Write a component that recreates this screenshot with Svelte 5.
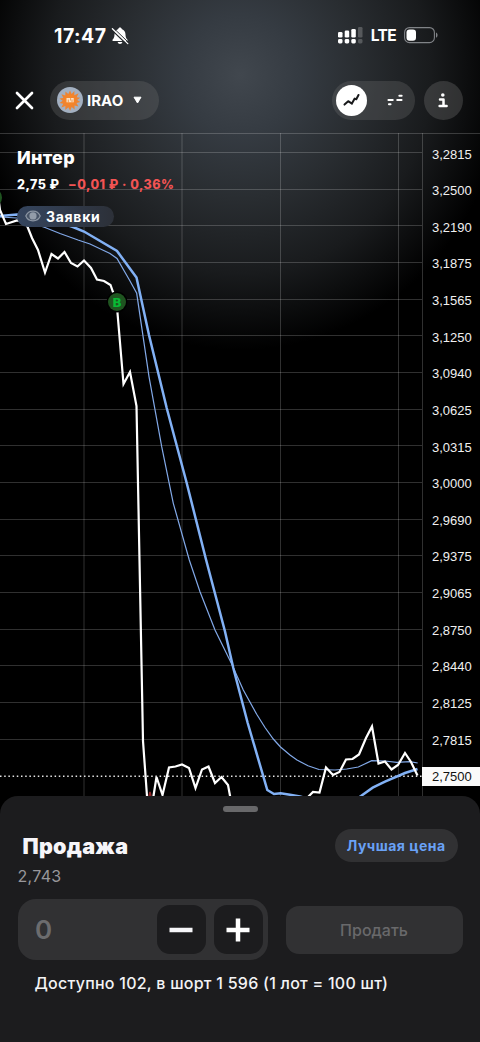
<script lang="ts">
  type Point = [number, number];

  const prices = [
    "3,2815", "3,2500", "3,2190", "3,1875", "3,1565", "3,1250",
    "3,0940", "3,0625", "3,0315", "3,0000", "2,9690", "2,9375",
    "2,9065", "2,8750", "2,8440", "2,8125", "2,7815", "2,7500",
  ];
  const current = "2,7500";

  const rowStep = 36.67;
  const rows = prices.slice(0, -1).map((_, i) => Math.floor(19.6 + i * rowStep) + 0.5);
  const columns = [84, 182, 280.5, 398.5, 422.5];

  const price: Point[] = [
    [-2, 62], [0, 77], [6, 91], [17, 87.5], [26, 90], [32, 105], [38, 117], [45, 139.5], [51.5, 121],
    [58, 125.5], [64.5, 119], [71, 130], [77.5, 133.5], [84, 127.5], [91, 135], [97, 146.5],
    [104, 148], [110.5, 152], [113, 159], [117, 169], [117.5, 180], [123.5, 251], [130, 239],
    [136.5, 273], [139.5, 427], [143, 608], [147, 663], [150, 700], [153.5, 663], [156.5, 644],
    [162.5, 662], [169, 634.5], [175.5, 633.5], [182, 631.5], [189, 635], [195.5, 655],
    [202, 636.5], [208.5, 633.5], [215, 650], [221.5, 644], [228, 652], [231, 668], [240, 700],
    [300, 700], [308, 664], [313, 659], [319.5, 659.5], [326, 634.5], [333, 642], [339.5, 639],
    [346, 626.5], [352.5, 626], [359, 621.5], [366, 605], [372, 593.5], [378.5, 630.5],
    [385, 628.5], [391.5, 636.5], [398, 632], [405, 620], [411, 629], [417.5, 642.5],
  ];
  const slow: Point[] = [
    [0, 83], [17, 81.5], [50, 86], [73, 94], [84, 98.5], [117, 118], [136.5, 144.5], [149, 202],
    [166.7, 275], [186.7, 350], [206, 426.5], [225, 498.5], [233.3, 535], [247.7, 590],
    [267.3, 657], [274, 661], [280.7, 660.3], [290, 661.7], [300, 663.5], [330, 672], [350, 670],
    [361, 663], [372.7, 654.7], [385, 648.7], [405, 640], [417.5, 636],
  ];
  const fast: Point[] = [
    [0, 84], [17, 85], [45, 94.5], [60, 100.5], [78, 107], [90, 111], [110, 120.5], [117, 125.5],
    [130, 148], [136.7, 160.3], [149, 243.7], [161.7, 313.7], [173.3, 370.3], [189.3, 427],
    [200, 458.7], [215, 497], [231.7, 531], [243.3, 557], [256.7, 581.3], [265, 594.5],
    [273.3, 606], [280.5, 614], [290, 622], [297, 627], [308, 632.8], [319, 636.5], [335, 637],
    [346.7, 636], [358.3, 634], [371.7, 627.7], [385, 628], [396.7, 629.3], [410, 628.7],
    [417.7, 630],
  ];
</script>

<div class="screen">
  <div class="status">
    <div class="clock">
      <span>17:47</span>
      <svg width="18" height="18" viewBox="0 0 18 18" aria-hidden="true">
        <path d="M9 .6c-.9 0-1.6.6-1.7 1.4C4.700 2.900 3.500 5 3.500 7.500c0 2.700-.8 3.900-1.800 5-.6.7-.2 1.600.7 1.600h13.200c.9 0 1.300-.9.7-1.600-1-1.100-1.800-2.300-1.800-5 0-2.500-1.200-4.600-3.800-5.500C10.600 1.200 9.900.6 9 .6z" fill="#fff" />
        <path d="M6.600 15h4.800c-.3 1.300-1.200 2-2.400 2s-2.100-.7-2.400-2z" fill="#fff" />
        <path d="M1.200 3.200 15.500 17" stroke="#24282b" stroke-width="1.500" />
        <path d="M2.600 1.200 17.400 15.400" stroke="#24282b" stroke-width="1" />
        <path d="M1.400 1.800 16.800 16.600" stroke="#fff" stroke-width="1.300" stroke-linecap="round" />
      </svg>
    </div>
    <div class="network">
      <svg width="25" height="17" viewBox="0 0 25 17" fill="#fff" aria-hidden="true">
        <rect x="0" y="5" width="4.500" height="5.500" rx="1.300" />
        <rect x="6.700" y="3.500" width="4.500" height="7" rx="1.300" />
        <rect x="13.300" y="2" width="4.500" height="8.500" rx="1.300" />
        <rect x="20" y="0" width="4.500" height="10.500" rx="1.300" opacity=".22" />
        <rect x="0" y="12" width="4.500" height="4.500" rx="1.400" />
        <rect x="6.700" y="12" width="4.500" height="4.500" rx="1.400" />
        <rect x="13.300" y="12" width="4.500" height="4.500" rx="1.400" />
        <rect x="20" y="12" width="4.500" height="4.500" rx="1.400" opacity=".22" />
      </svg>
      <span>LTE</span>
      <svg width="35" height="17" viewBox="0 0 35 17" aria-hidden="true">
        <rect x=".6" y=".6" width="29.800" height="15" rx="4.800" fill="none" stroke="#808387" stroke-width="1.100" />
        <rect x="2.500" y="2.500" width="9.500" height="11.200" rx="3" fill="#fff" />
        <path d="M32 5.500c2 .8 2 4.400 0 5.200z" fill="#808387" />
      </svg>
    </div>
  </div>

  <header>
    <svg width="19" height="19" viewBox="0 0 19 19" aria-label="Закрыть">
      <path d="M2 2l15 15M17 2 2 17" stroke="#fff" stroke-width="2.700" stroke-linecap="round" />
    </svg>
    <div class="ticker">
      <svg width="26" height="26" viewBox="0 0 26 26" aria-hidden="true">
        <circle cx="13" cy="13" r="13" fill="#a3b0c1" />
        <path d="M13 3.500l1.600 3.600 2.800-3.100-.1 4.200 4.300-1.900-1.900 3.900 3.500.5-3.100 2.300 3.300 2.100-3.900.8 2 3.600-4-.9.100 4-2.900-2.500-1.600 3.700-1.800-3.500-3 2.700.1-4-4.100 1.400 1.900-3.600-3.700-.8 3.200-2.200-3.300-2.300 3.900-.6-1.800-3.600 3.800 1.100.1-3.900 2.900 2.500z" fill="#ef8430" />
        <circle cx="13" cy="13" r="5.400" fill="#f58529" />
        <path d="M9.500 11h7.200v4.300H9.500z" fill="#fbe3c8" />
        <path d="M11.300 12.600v2.700M13.600 11v2.500M15 12.500v2.800" stroke="#e98432" stroke-width=".8" />
      </svg>
      <span>IRAO</span>
      <svg width="9" height="8" viewBox="0 0 9 8" aria-hidden="true">
        <path d="M1 1.200h7L4.500 7z" fill="#fff" stroke="#fff" stroke-linejoin="round" />
      </svg>
    </div>
    <div class="modes">
      <div class="mode active">
        <svg width="17" height="14" viewBox="0 0 17 14" fill="none" aria-hidden="true">
          <path d="M1.500 11.600 5.200 8.200 8.900 10.600 11.700 5.600 13.300 6.200 15.500 2" stroke="#18191b" stroke-width="2" stroke-linecap="round" stroke-linejoin="round" />
        </svg>
      </div>
      <div class="mode">
        <svg width="18" height="12" viewBox="0 0 18 12" aria-hidden="true">
          <path d="M13.300 1.800h2.400M2.400 6h4.400M11.200 6h4.400M2.900 10.300h1.700" stroke="#fff" stroke-width="1.900" stroke-linecap="round" />
        </svg>
      </div>
    </div>
    <div class="info">
      <svg width="10" height="15" viewBox="0 0 10 15" aria-hidden="true">
        <circle cx="4.800" cy="2" r="1.800" fill="#fff" />
        <path d="M2 6.500h3.500v6.200M1.600 13h7" fill="none" stroke="#fff" stroke-width="2.500" stroke-linecap="round" stroke-linejoin="round" />
      </svg>
    </div>
  </header>

  <main>
    <svg class="chart" width="480" height="683" viewBox="0 0 480 683" fill="none" aria-hidden="true">
      <g class="grid">
        <path d="M0 .5H480" />
        {#each rows as y}
          <path d="M0 {y}H422" />
        {/each}
        {#each columns as x}
          <path d="M{x} 0V683" />
        {/each}
      </g>
      <path d="M0 643.200H422" stroke="#e4e4e4" stroke-width="1.400" stroke-dasharray="1.500 2.700" />
      <path d="M149 663l1-4 1 4" stroke="#8e2326" stroke-width="1.500" />
      <polyline class="fast" points={fast.join(" ")} />
      <polyline class="slow" points={slow.join(" ")} />
      <polyline class="price" points={price.join(" ")} />
      <circle cx="-7" cy="64.500" r="9" fill="#1f5420" />
      <circle cx="117" cy="169" r="10.500" fill="#000" />
      <circle cx="117" cy="169" r="9" fill="#1f5420" />
      <text class="deal" x="117" y="173.500">B</text>
    </svg>

    <section class="summary">
      <h1>Интер</h1>
      <p class="quote"><span>2,75 ₽</span><span class="change">−0,01 ₽ · 0,36%</span></p>
      <div class="orders">
        <svg width="16" height="12" viewBox="0 0 16 12" aria-hidden="true">
          <path d="M.8 6C3.500-.4 12.500-.4 15.200 6 12.500 12.400 3.500 12.400.8 6z" fill="#465366" stroke="#8d97a4" stroke-width="1.200" />
          <circle cx="8" cy="5.900" r="3.600" fill="#929ca9" />
        </svg>
        <span>Заявки</span>
      </div>
    </section>

    <ol class="axis">
      {#each prices as value (value)}
        <li><span class:current={value === current}>{value}</span></li>
      {/each}
    </ol>
  </main>

  <section class="sheet">
    <div class="handle"></div>
    <div class="heading">
      <h2>Продажа</h2>
      <button class="best">Лучшая цена</button>
    </div>
    <div class="limit">2,743</div>
    <div class="form">
      <div class="amount">
        <span>0</span>
        <button class="step" aria-label="Меньше">
          <svg width="24" height="24" viewBox="0 0 24 24"><path d="M.5 12h23" stroke="#f6f6f9" stroke-width="4.500" /></svg>
        </button>
        <button class="step" aria-label="Больше">
          <svg width="24" height="24" viewBox="0 0 24 24"><path d="M.5 12h23M12 .5v23" stroke="#fff" stroke-width="4.500" /></svg>
        </button>
      </div>
      <button class="sell">Продать</button>
    </div>
    <p class="available">Доступно 102, в шорт 1 596 (1 лот = 100 шт)</p>
  </section>
</div>

<style>
  :global(body) {
    background: #000;
  }
  .screen {
    display: flex;
    flex-direction: column;
    width: 480px;
    height: 1042px;
    overflow: hidden;
    color: #fff;
    font-family: Inter, "Noto Sans", sans-serif;
    background: #000 radial-gradient(ellipse 265px 275px at 240px 75px, #41474e 0%, #353b42 22%, #292d31 45%, #191b1d 72%, #000 100%);
  }
  h1, h2, p, ol {
    margin: 0;
    padding: 0;
  }
  svg {
    display: block;
    flex: none;
  }
  button {
    border: 0;
    padding: 0;
    font: inherit;
    color: inherit;
  }
  .status {
    display: flex;
    justify-content: space-between;
    align-items: center;
    height: 71px;
    box-sizing: border-box;
    padding: 0 41px 0 54px;
  }
  .clock {
    display: flex;
    align-items: center;
    gap: 4px;
    font-size: 19.5px;
    font-weight: 700;
    letter-spacing: 0.5px;
  }
  .network {
    display: flex;
    align-items: center;
    gap: 8px;
    font-size: 15.5px;
    font-weight: 700;
    letter-spacing: -0.6px;
  }
  header {
    display: flex;
    align-items: center;
    height: 39px;
    padding: 9.5px 17.5px 13.5px 15px;
  }
  .ticker {
    display: flex;
    align-items: center;
    box-sizing: border-box;
    width: 108.5px;
    height: 39px;
    margin-left: 16px;
    padding-left: 6.5px;
    border-radius: 20px;
    background: rgba(118, 118, 118, 0.28);
    font-size: 15px;
    font-weight: 700;
  }
  .ticker span {
    width: 46px;
    margin-left: 4.5px;
  }
  .modes {
    display: flex;
    align-items: center;
    justify-content: space-between;
    box-sizing: border-box;
    width: 82.5px;
    height: 39px;
    margin-left: auto;
    padding: 0 4px;
    border-radius: 20px;
    background: rgba(118, 118, 118, 0.28);
  }
  .mode {
    display: grid;
    place-items: center;
    width: 31px;
    height: 31px;
    border-radius: 50%;
  }
  .mode.active {
    background: #fff;
  }
  .info {
    display: grid;
    place-items: center;
    width: 39px;
    height: 39px;
    margin-left: 9px;
    border-radius: 50%;
    background: rgba(118, 118, 118, 0.33);
  }
  main {
    display: grid;
    grid-template-columns: 422px 58px;
    height: 663px;
  }
  .chart {
    grid-area: 1 / 1 / 2 / 3;
  }
  .grid path {
    stroke: rgba(255, 255, 255, 0.19);
  }
  .price {
    stroke: #fff;
    stroke-width: 2.2;
  }
  .slow {
    stroke: #82b1f5;
    stroke-width: 2.5;
  }
  .fast {
    stroke: #82a9e8;
    stroke-width: 1.2;
  }
  .deal {
    fill: #07b934;
    font: bold 12.5px "DejaVu Sans", sans-serif;
    text-anchor: middle;
  }
  .summary {
    grid-area: 1 / 1;
    padding: 13.5px 0 0 17px;
  }
  h1 {
    font-size: 18px;
    line-height: 22px;
    font-weight: 800;
    letter-spacing: 0.3px;
  }
  .quote {
    display: flex;
    gap: 8.5px;
    margin-top: 7.5px;
    font-size: 12.5px;
    line-height: 17px;
    font-weight: 800;
    letter-spacing: 0.5px;
  }
  .change {
    color: #f25454;
  }
  .orders {
    display: flex;
    align-items: center;
    gap: 5px;
    box-sizing: border-box;
    width: 96.5px;
    height: 21.5px;
    margin-top: 12.5px;
    padding-left: 8px;
    border-radius: 11px;
    background: linear-gradient(90deg, #35455e, #2c3038);
    font-size: 14px;
    font-weight: 700;
    letter-spacing: 0.7px;
  }
  .axis {
    grid-area: 1 / 2;
    padding-top: 2.8px;
    list-style: none;
    font: 13px/19px "Liberation Sans", Arial, sans-serif;
    color: #f0f0f0;
  }
  .axis li {
    display: flex;
    align-items: center;
    height: 36.63px;
  }
  .axis span {
    flex: 1;
    padding-left: 10px;
  }
  .axis .current {
    background: #fafafa;
    color: #111;
  }
  .sheet {
    flex: 1;
    padding: 10px 17.5px 0;
    border-radius: 18px 18px 0 0;
    background: #1c1c1e;
    z-index: 1;
  }
  .handle {
    width: 35px;
    height: 5.5px;
    margin: 0 auto;
    border-radius: 3px;
    background: #68686a;
  }
  .heading {
    display: flex;
    align-items: center;
    justify-content: space-between;
    margin-top: 17.5px;
    padding: 0 4.5px 0 5px;
  }
  h2 {
    font-size: 21.5px;
    font-weight: 900;
    letter-spacing: 0.3px;
    color: #f6f5f9;
  }
  .best {
    width: 123.5px;
    height: 33px;
    border-radius: 17px;
    background: #313133;
    color: #69a1f6;
    font-size: 14px;
    font-weight: 700;
    letter-spacing: 0.5px;
  }
  .limit {
    margin-top: 4px;
    font-size: 16px;
    line-height: 20px;
    letter-spacing: 0.3px;
    color: #98979b;
  }
  .form {
    display: flex;
    align-items: center;
    justify-content: space-between;
    margin-top: 13px;
  }
  .amount {
    display: flex;
    align-items: center;
    gap: 8.5px;
    box-sizing: border-box;
    width: 250.5px;
    height: 61px;
    padding: 0 5.5px 0 17.5px;
    border-radius: 18px;
    background: #313133;
  }
  .amount span {
    flex: 1;
    color: #6c6c6e;
    font-size: 26px;
    font-weight: 600;
  }
  .step {
    display: grid;
    place-items: center;
    width: 48.5px;
    height: 48.5px;
    border-radius: 13px;
    background: #1c1c1e;
  }
  .sell {
    width: 177px;
    height: 48px;
    border-radius: 13px;
    background: #313133;
    color: #69696b;
    font-size: 16px;
    font-weight: 500;
  }
  .available {
    margin: 13px 0 0 17px;
    font-size: 16px;
    line-height: 20px;
    font-weight: 500;
    letter-spacing: 0.25px;
    color: #f3f3f5;
  }
</style>
